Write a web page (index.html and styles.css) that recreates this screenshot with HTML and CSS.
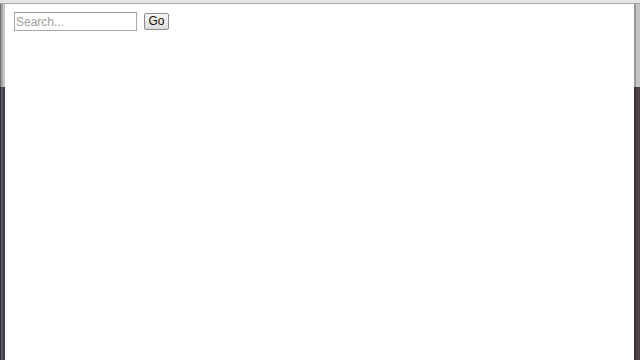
FILE: index.html
```html
<!DOCTYPE html>
<html>
<head>
<meta charset="utf-8">
<link rel="stylesheet" href="styles.css">
</head>
<body>
<div class="window">
  <div class="topbar"></div>
  <div class="main">
    <div class="edge edge-left"></div>
    <div class="content">
      <form class="search">
        <input class="search-input" type="text" placeholder="Search...">
        <button class="go" type="button">Go</button>
      </form>
    </div>
    <div class="edge edge-right"></div>
  </div>
</div>
</body>
</html>
```
FILE: styles.css
```css
html, body {
  margin: 0;
  padding: 0;
  width: 640px;
  height: 360px;
  overflow: hidden;
  background: #ffffff;
}
.window {
  display: flex;
  flex-direction: column;
  width: 640px;
  height: 360px;
}
.topbar {
  height: 3px;
  background: #e4e4e4;
  border-bottom: 1px solid #a8a8a8;
  flex: none;
}
.main {
  flex: 1;
  display: flex;
}
.edge {
  flex: none;
}
.edge-left {
  width: 5px;
  background:
    linear-gradient(to bottom, transparent 83px, #2e2c33 83px) left/1px 100% no-repeat,
    linear-gradient(to bottom, transparent 83px, #5b5660 83px) 1px 0/2px 100% no-repeat,
    linear-gradient(to bottom, transparent 83px, #403c44 83px) 3px 0/2px 100% no-repeat,
    linear-gradient(to right, #6a6a6a 0 1px, #a6a6a6 1px 3px, #c8c8c8 3px 5px);
}
.edge-right {
  width: 6px;
  background:
    linear-gradient(to bottom, transparent 83px, #3c2e33 83px) 0 0/2px 100% no-repeat,
    linear-gradient(to bottom, transparent 83px, #4e4248 83px) 2px 0/4px 100% no-repeat,
    linear-gradient(to right, #9a9a9a 0 2px, #c4c4c4 2px 6px);
}
.content {
  flex: 1;
  padding: 8px 0 0 9px;
}
.search {
  display: flex;
  align-items: center;
  gap: 7px;
  margin: 0;
}
.search-input {
  box-sizing: border-box;
  width: 123px;
  height: 19px;
  margin: 0;
  padding: 0 1px;
  border: 1px solid #a9a9a9;
  border-top-color: #9a9a9a;
  background: #fff;
  font-family: "Liberation Sans", Arial, sans-serif;
  font-size: 12px;
  color: #333;
  outline: none;
}
.search-input::placeholder {
  color: #a0a0a0;
}
.go {
  box-sizing: border-box;
  width: 25px;
  height: 17px;
  margin: 0;
  padding: 0;
  border: 1px solid #8c8c8c;
  border-radius: 2px;
  background: linear-gradient(to bottom, #f6f6f6, #dcdcdc);
  font-family: "Liberation Sans", Arial, sans-serif;
  font-size: 12px;
  color: #111;
  line-height: 15px;
}
```
